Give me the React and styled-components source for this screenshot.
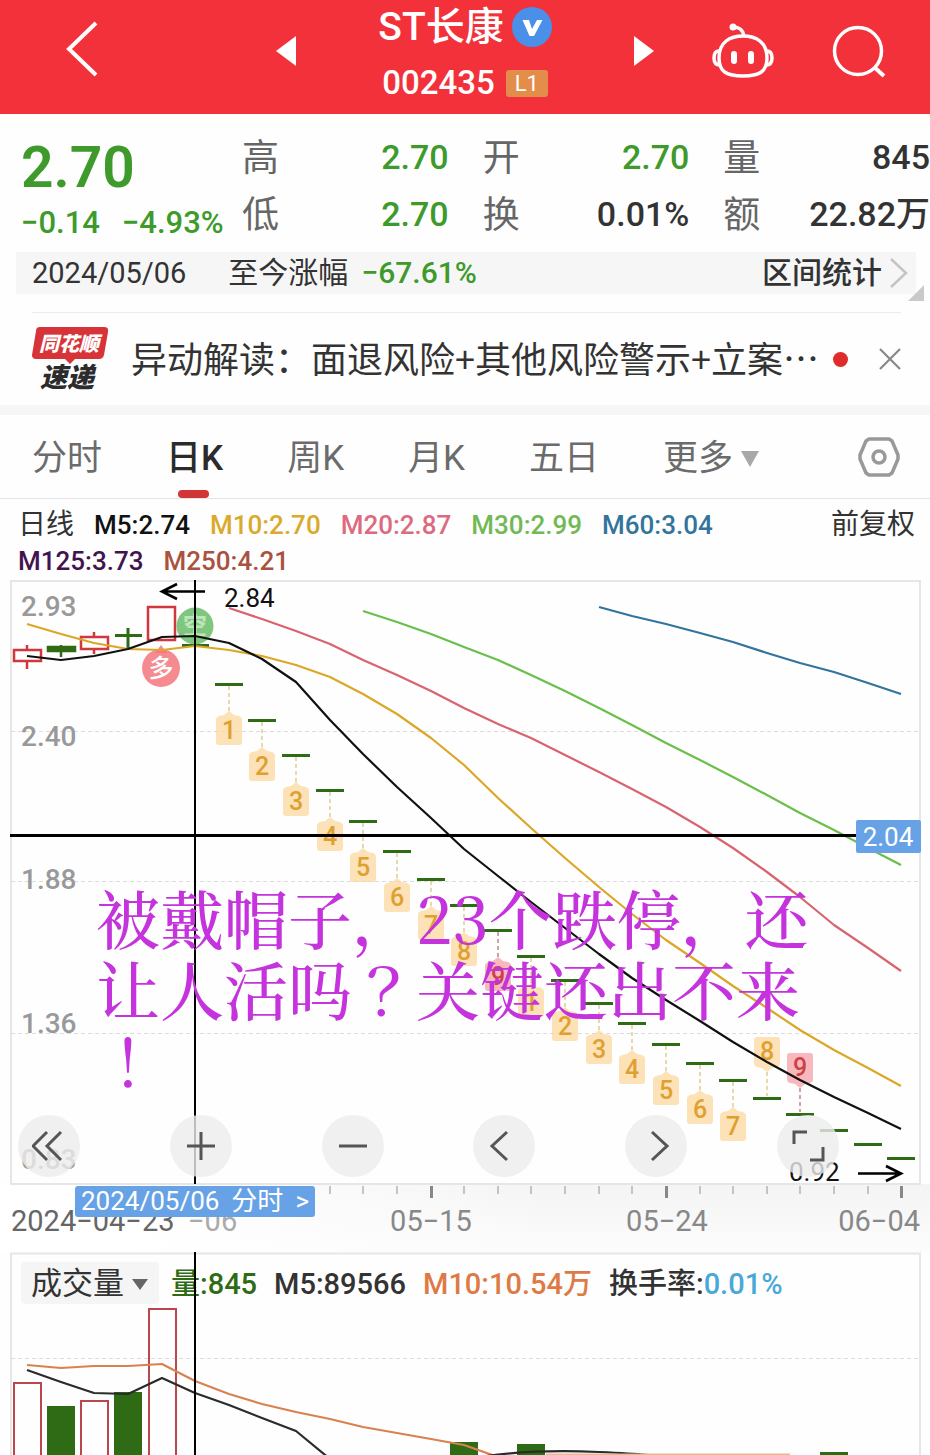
import React from 'react'
import styled, { createGlobalStyle } from 'styled-components'

const GlobalStyle = createGlobalStyle`
  * { box-sizing: border-box; }
  body {
    margin: 0;
    background: #fefefe;
    color: #333;
    font-family: Roboto, "Noto Sans CJK SC", sans-serif;
    line-height: 1.2;
  }
  button {
    border: 0;
    padding: 0;
    background: none;
    font: inherit;
    color: inherit;
    cursor: pointer;
  }
  dl, dt, dd, h1, p { margin: 0; font-weight: 400; }
  svg { display: block; }
`

const UP = '#d0383e'
const DOWN = '#3d9a2b'
const CANDLE_DOWN = '#2f6b14'

/* ---------- header ---------- */

const Header = styled.header`
  display: grid;
  grid-template-columns: 1fr 378px 1fr;
  align-items: center;
  height: 114px;
  background: #f2313a;
  color: #fff;
`

const BackButton = styled.button`
  justify-self: start;
  margin: 0 0 16px 64px;
`

const Switcher = styled.div`
  display: flex;
  align-items: center;
  justify-content: space-between;
  padding-bottom: 12px;
`

const Title = styled.div`
  display: flex;
  flex-direction: column;
  align-items: center;
`

const NameRow = styled.h1`
  display: flex;
  align-items: center;
  gap: 8px;
  height: 54px;
  font-size: 39px;
  font-weight: 500;
`

const CodeRow = styled.div`
  display: flex;
  align-items: center;
  gap: 11px;
  height: 48px;
  padding-top: 10px;
  font-size: 33px;
  font-weight: 500;
`

const LevelBadge = styled.span`
  width: 42px;
  border-radius: 3px;
  background: #e38d4b;
  font-size: 22px;
  font-weight: 400;
  line-height: 27px;
  text-align: center;
`

const HeaderTools = styled.div`
  display: flex;
  justify-content: flex-end;
  align-items: center;
  gap: 58px;
  padding: 0 44px 12px 0;
`

/* ---------- quote ---------- */

const Quote = styled.section`
  display: grid;
  grid-template-columns: 242px 1fr;
  padding-top: 14px;
`

const PriceBlock = styled.div`
  padding-left: 21px;
  color: ${DOWN};
`

const Price = styled.p`
  padding-top: 2px;
  font-size: 57px;
  font-weight: 600;
  line-height: 76px;
`

const Change = styled.p`
  display: flex;
  gap: 22px;
  font-size: 31px;
  font-weight: 500;
  line-height: 34px;
  white-space: nowrap;
`

const Stats = styled.dl`
  display: grid;
  grid-template-columns: repeat(3, 1fr);
  column-gap: 34px;
`

const Stat = styled.div`
  display: flex;
  justify-content: space-between;
  align-items: center;
  height: 57px;
  dt {
    padding-top: 5px;
    color: #666;
    font-size: 37px;
  }
  dd {
    padding-top: 2px;
    color: ${p => (p.$down ? DOWN : '#333')};
    font-size: 34px;
    font-weight: 500;
  }
`

const RangeBar = styled.div`
  position: relative;
  display: flex;
  align-items: center;
  height: 42px;
  margin: 10px 14px 18px 16px;
  padding: 0 8px 0 16px;
  background: #f6f6f6;
  font-size: 30px;
  time {
    margin-right: 42px;
    font-size: 29px;
  }
`

const RangeChange = styled.span`
  margin-left: 13px;
  color: ${DOWN};
  font-weight: 500;
`

const RangeButton = styled.button`
  display: flex;
  align-items: center;
  gap: 8px;
  margin-left: auto;
  font-weight: 500;
`

const Corner = styled.span`
  position: absolute;
  right: -8px;
  bottom: -7px;
  border: 8px solid transparent;
  border-right-color: #c9c9c9;
  border-bottom-color: #c9c9c9;
`

/* ---------- news ---------- */

const News = styled.section`
  display: flex;
  align-items: center;
  height: 93px;
  margin: 0 29px 0 32px;
  border-top: 1px solid #ececec;
`

const Headline = styled.a`
  flex: 1;
  margin-left: 22px;
  padding-bottom: 2px;
  color: #333;
  font-family: "Noto Sans CJK SC", sans-serif;
  font-size: 36px;
  text-decoration: none;
  white-space: nowrap;
`

const UnreadDot = styled.span`
  width: 15px;
  height: 15px;
  margin-right: 31px;
  border-radius: 50%;
  background: #e02b2b;
`

/* ---------- period tabs ---------- */

const Tabs = styled.nav`
  display: flex;
  align-items: center;
  gap: 64px;
  height: 94px;
  padding: 0 30px 0 32px;
  border-top: 10px solid #f6f6f6;
  border-bottom: 1px solid #e4e4e4;
  color: #6b6b6b;
  font-size: 35px;
`

const Tab = styled.button`
  position: relative;
  display: flex;
  align-items: center;
  gap: 8px;
  height: 83px;
  padding-top: 5px;
  white-space: nowrap;
  ${p => p.$active && `
    color: #2b2b2b;
    font-weight: 500;
    &::after {
      content: '';
      position: absolute;
      left: 12px;
      bottom: 0;
      width: 31px;
      height: 8px;
      border-radius: 4px;
      background: #d13535;
    }
  `}
`

const SettingsButton = styled.button`
  margin-left: auto;
`

/* ---------- moving average legend ---------- */

const Legend = styled.div`
  display: flex;
  align-items: flex-start;
  justify-content: space-between;
  height: 81px;
  padding: 8px 15px 0 18px;
  font-size: 26px;
  line-height: 36px;
`

const LegendList = styled.div`
  display: flex;
  flex-wrap: wrap;
  column-gap: 20px;
  max-width: 740px;
`

const LegendItem = styled.span`
  color: ${p => p.$color};
  font-weight: 500;
`

const LegendTitle = styled.span`
  font-size: 28px;
`

const AdjustButton = styled.button`
  font-size: 28px;
  line-height: 36px;
`

/* ---------- charts ---------- */

const ChartBox = styled.section`
  position: relative;
`

const ChartSvg = styled.svg`
  width: 100%;
  height: auto;
`

const Caption = styled.p`
  position: absolute;
  top: 301px;
  left: 96px;
  color: #c433dc;
  font-family: "Noto Serif CJK SC", "Liberation Serif", serif;
  font-size: 64px;
  font-weight: 500;
  line-height: 71px;
  white-space: nowrap;
  pointer-events: none;
`

const Controls = styled.div`
  position: absolute;
  left: 18px;
  right: 91px;
  bottom: 7px;
  display: flex;
  justify-content: space-between;
`

const RoundButton = styled.button`
  display: flex;
  align-items: center;
  justify-content: center;
  width: 62px;
  height: 62px;
  border-radius: 50%;
  background: rgba(236, 236, 236, 0.8);
`

const Axis = styled.div`
  position: relative;
  background: linear-gradient(to right, #fff 12%, transparent 60%), linear-gradient(#f4f4f4, #fcfcfc);
`

const DateTag = styled.button`
  position: absolute;
  top: 2px;
  left: 75px;
  display: flex;
  align-items: center;
  gap: 12px;
  height: 31px;
  padding: 0 6px;
  border-radius: 3px;
  background: #68a2e6;
  color: #fff;
  font-size: 26px;
  white-space: nowrap;
`

const VolumeHead = styled.div`
  position: absolute;
  top: 10px;
  left: 21px;
  display: flex;
  align-items: center;
  gap: 17px;
  height: 42px;
  font-size: 29px;
  line-height: 42px;
  white-space: nowrap;
`

const VolumeSelect = styled.button`
  display: flex;
  align-items: center;
  gap: 8px;
  height: 42px;
  margin-right: -5px;
  padding: 2px 11px 0 10px;
  border-radius: 4px;
  background: #f5f5f5;
  font-size: 31px;
`

const VolumeItem = styled.span`
  padding-top: 2px;
  color: ${p => p.$color};
  font-weight: 500;
`

const VolumeSvg = styled(ChartSvg)`
  position: relative;
  pointer-events: none;
`

const STATS = [
  ['高', '2.70', true],
  ['开', '2.70', true],
  ['量', '845', false],
  ['低', '2.70', true],
  ['换', '0.01%', false],
  ['额', '22.82万', false],
]

const AVERAGES = [
  ['M5:2.74', '#111'],
  ['M10:2.70', '#dba92c'],
  ['M20:2.87', '#dd6b80'],
  ['M30:2.99', '#72b956'],
  ['M60:3.04', '#32749c'],
  ['M125:3.73', '#43134f'],
  ['M250:4.21', '#a9523f'],
]

// x position of the n-th trading day
const dayX = n => 27 + Math.round(n * 33.63)

const LINES = [
  { color: '#32749c', from: 17, ys: [27, 36, 44, 53, 62, 73, 83, 92, 103, 114] },
  { color: '#6abf4b', from: 10, ys: [31, 42, 54, 67, 80, 95, 111, 128, 145, 163, 180, 197, 215, 233, 250, 268, 285] },
  { color: '#d9636f', from: 6, ys: [28, 39, 51, 64, 80, 95, 111, 128, 144, 158, 175, 192, 209, 227, 247, 268, 292, 317, 345, 368, 391] },
  { color: '#dca726', from: 0, ys: [44, 54, 63, 69, 70, 66, 70, 76, 85, 97, 114, 134, 158, 185, 218, 248, 278, 307, 334, 360, 383, 406, 428, 450, 470, 488, 506] },
  { color: '#111', from: 0, ys: [76, 80, 76, 69, 57, 56, 63, 79, 102, 140, 174, 207, 238, 269, 296, 322, 348, 374, 398, 420, 441, 462, 482, 500, 517, 533, 549] },
]

const points = (from, ys) => ys.map((y, i) => `${dayX(from + i)},${y}`).join(' ')

// limit-down days, starting at the 7th day
const DROPS = [104, 140, 175, 210, 241, 271, 299, 325, 350, 376, 400, 423, 443, 464, 483, 500, 518, 534, 550, 564, 578]
const COUNTS = [1, 2, 3, 4, 5, 6, 7, 8, 9, 1, 2, 3, 4, 5, 6, 7, 8, 9]

function CountMark({ x, y, count, above }) {
  const hot = count === 9
  const top = above ? y - 61 : y + 27
  const shape = above
    ? `M${x - 13} ${top + 3}q0-3 3-3h20q3 0 3 3v23q0 3-3 4l-5 1-5 4-5-4-5-1q-3-1-3-4z`
    : `M${x} ${top}l5 4 5 1q3 1 3 4v22q0 3-3 3h-20q-3 0-3-3v-22q0-3 3-4l5-1z`
  return (
    <g>
      <line
        x1={x} x2={x}
        y1={above ? top + 35 : y + 2} y2={above ? y - 2 : top}
        stroke={hot ? '#8d5050' : '#cdb35e'} strokeWidth="1" strokeDasharray="4 3"
      />
      <path d={shape} fill={hot ? '#f28b92' : '#fbd597'} opacity={hot ? 0.6 : 0.7} />
      <text x={x} y={top + (above ? 23 : 28)} textAnchor="middle" fontSize="25" fontWeight="500" fill={hot ? '#cf4148' : '#dfa031'}>{count}</text>
    </g>
  )
}

function Candle({ x, top, bottom, high, low, rise }) {
  const color = rise ? UP : CANDLE_DOWN
  return (
    <g stroke={color} strokeWidth="2.5" fill={rise ? 'none' : color}>
      <line x1={x} x2={x} y1={high} y2={top} />
      <rect x={x - 13} y={top} width="27" height={bottom - top} />
      <line x1={x} x2={x} y1={bottom} y2={low} />
    </g>
  )
}

function PriceChart() {
  return (
    <ChartSvg viewBox="0 0 930 604" role="img" aria-label="日K">
      <rect x="11" y="1" width="909" height="603" fill="none" stroke="#e6e6e6" strokeWidth="2" />
      <g stroke="#dcdcdc" strokeDasharray="4 3">
        <line x1="11" x2="920" y1="151.5" y2="151.5" />
        <line x1="11" x2="920" y1="301.5" y2="301.5" />
        <line x1="11" x2="920" y1="453.5" y2="453.5" />
      </g>
      <g fill="#999" fontSize="28" fontWeight="500">
        <text x="21" y="36">2.93</text>
        <text x="21" y="166">2.40</text>
        <text x="21" y="309">1.88</text>
        <text x="21" y="453">1.36</text>
        <text x="21" y="589">0.83</text>
      </g>

      <Candle x={27} high={65} top={70} bottom={81} low={89} rise />
      <Candle x={61} high={65} top={67} bottom={71} low={77} />
      <Candle x={94} high={52} top={57} bottom={69} low={74} rise />
      <path d="M115 55.500h27M128 48v20" stroke={CANDLE_DOWN} strokeWidth="3" />
      <Candle x={161} high={27} top={27} bottom={60} low={60} rise />
      <rect x="182" y="64" width="27" height="3" fill={CANDLE_DOWN} />

      <circle cx="195" cy="46" r="18.500" fill="#5fb95f" opacity="0.8" />
      <text x="195" y="54" textAnchor="middle" fontSize="24" fontWeight="700" fill="#bfe6bb">空</text>
      <path d="M161 65l6 8h-12z" fill="#f3777c" opacity="0.85" />
      <circle cx="161" cy="88" r="19" fill="#f3777c" opacity="0.85" />
      <text x="161" y="97" textAnchor="middle" fontSize="25" fontWeight="500" fill="#fff">多</text>

      {DROPS.map((y, i) => (
        <rect key={i} x={dayX(i + 6) - 14} y={y - 1} width="28" height="3" fill={CANDLE_DOWN} />
      ))}
      {COUNTS.map((count, i) => (
        <CountMark key={i} x={dayX(i + 6)} y={DROPS[i]} count={count} above={i > 15} />
      ))}
      {LINES.map(line => (
        <polyline key={line.color} points={points(line.from, line.ys)} fill="none" stroke={line.color} strokeWidth="2.2" strokeLinejoin="round" />
      ))}

      <g fill="none" stroke="#000" strokeWidth="2.6">
        <path d="M205 11.500H162M177 4l-15 7.500 15 7.500" />
        <path d="M858 593.500h43M886 586l15 7.500-15 7.500" />
      </g>
      <text x="224" y="27" fontSize="26" fill="#111">2.84</text>
      <text x="789" y="601" fontSize="26" fill="#111">0.92</text>

      <rect x="10" y="254" width="846" height="3" fill="#000" />
      <rect x="194" y="0" width="2" height="604" fill="#000" />
      <rect x="856" y="240" width="65" height="33" rx="2" fill="#68a2e6" />
      <text x="888" y="266" textAnchor="middle" fontSize="26" fill="#fff">2.04</text>
    </ChartSvg>
  )
}

function DateAxis() {
  const ticks = Array.from({ length: 21 }, (_, i) => i + 6)
  return (
    <ChartSvg viewBox="0 0 930 68" role="img" aria-label="日期">
      <line x1="10" x2="921" y1="0.5" y2="0.5" stroke="#e6e6e6" />
      {ticks.map(n => {
        const major = n === 12 || n === 19 || n === 26
        return <rect key={n} x={dayX(n) - 1} y="2" width={major ? 3 : 2} height={major ? 12 : 8} fill={major ? '#888' : '#c4c4c4'} />
      })}
      <g fontSize="29" fill="#888">
        <text x="188" y="47" fill="#aaa">−06</text>
        <text x="431" y="47" textAnchor="middle">05−15</text>
        <text x="667" y="47" textAnchor="middle">05−24</text>
        <text x="920" y="47" textAnchor="end">06−04</text>
        <text x="11" y="47" fill="#666">2024−04−23</text>
      </g>
    </ChartSvg>
  )
}

const VOLUMES = [
  [0, 130, true],
  [1, 154, false],
  [2, 148, true],
  [3, 140, false],
  [4, 56, true],
  [13, 190, false],
  [15, 192, false],
  [24, 200, false],
]

function VolumeChart() {
  return (
    <VolumeSvg viewBox="0 0 930 203" role="img" aria-label="成交量">
      <path d="M11 203V1.500H920V203" fill="none" stroke="#e6e6e6" strokeWidth="2" />
      <line x1="11" x2="920" y1="106.500" y2="106.500" stroke="#dcdcdc" strokeDasharray="4 3" />
      {VOLUMES.map(([n, y, rise]) => rise
        ? <path key={n} d={`M${dayX(n) - 13} 203V${y + 1}h27V203`} fill="none" stroke="#b9474c" strokeWidth="2" />
        : <rect key={n} x={dayX(n) - 14} y={y} width="28" height={203 - y} fill={CANDLE_DOWN} />)}
      <g fill="none" strokeWidth="2.2" strokeLinejoin="round">
        <polyline stroke="#d9814f" points={points(0, [113, 116, 114, 114, 112, 129, 142, 152, 160, 167, 175, 181, 187, 193, 205])} />
        <polyline stroke="#2b2b2b" points={points(0, [118, 130, 141, 142, 126, 141, 153, 166, 179, 207])} />
        <path stroke="#2b2b2b" d="M480 205Q531 197 599 200T650 205" />
        <path stroke="#e9b594" d="M546 202.500H790" />
      </g>
      <rect x="194" y="0" width="2" height="203" fill="#000" />
    </VolumeSvg>
  )
}

const Stroke = ({ d }) => (
  <svg width="34" height="34" viewBox="0 0 34 34" fill="none" stroke="#555" strokeWidth="3" aria-hidden="true">
    <path d={d} />
  </svg>
)

const CONTROLS = [
  ['最早', 'M15 3L1 17l14 14M29 3L15 17l14 14'],
  ['放大', 'M17 3v28M3 17h28'],
  ['缩小', 'M3 17h28'],
  ['向左', 'M20 3L5 17l15 14'],
  ['向右', 'M13 3l15 14-15 14'],
  ['全屏', 'M3 15V3h13M19 31h13V18'],
]

function NewsLogo() {
  return (
    <svg width="77" height="66" viewBox="0 0 77 66" aria-label="同花顺速递" role="img">
      <path d="M8 1h64q5 0 4 5l-4 23q-1 4-5 4H43l-5 5-5-5H4q-4 0-4-4L4 5q0-4 4-4z" fill="#d63438" />
      <g fontFamily="'Noto Sans CJK SC', sans-serif" fontWeight="900" fontStyle="italic">
        <text x="7" y="25" fontSize="20" fill="#fff">同花顺</text>
        <text x="8" y="61" fontSize="27" fill="#2c2c2c">速递</text>
      </g>
    </svg>
  )
}

function App() {
  return (
    <>
      <GlobalStyle />
      <Header>
        <BackButton aria-label="返回">
          <svg width="36" height="58" viewBox="0 0 36 58" fill="none" stroke="#fff" strokeWidth="4"><path d="M32 3L5 29l27 26" /></svg>
        </BackButton>
        <Switcher>
          <button aria-label="上一只"><svg width="21" height="30" viewBox="0 0 21 30"><path d="M20 0v30L0 15z" fill="#fff" /></svg></button>
          <Title>
            <NameRow>
              ST长康
              <svg width="40" height="40" viewBox="0 0 40 40" aria-hidden="true">
                <circle cx="20" cy="20" r="20" fill="#4a90e8" />
                <path d="M10.500 13H17l3 9 5-9h5.500L22 29h-4.500z" fill="#fff" />
              </svg>
            </NameRow>
            <CodeRow>002435<LevelBadge>L1</LevelBadge></CodeRow>
          </Title>
          <button aria-label="下一只"><svg width="21" height="30" viewBox="0 0 21 30"><path d="M1 0v30l20-15z" fill="#fff" /></svg></button>
        </Switcher>
        <HeaderTools>
          <button aria-label="助手">
            <svg width="62" height="56" viewBox="0 0 62 56" fill="none" stroke="#fff" strokeWidth="3.500">
              <path d="M31 13c13 0 24 6 24 22 0 14-8 18-24 18S7 49 7 35c0-16 11-22 24-22z" />
              <path d="M7 28c-4 0-5 3-5 7s1 7 6 7M55 28c4 0 5 3 5 7s-1 7-6 7M21 4c6 0 10 2 11 9" />
              <circle cx="21" cy="4" r="3.500" fill="#fff" stroke="none" />
              <path d="M22 31v7M39 31v7" strokeWidth="6" strokeLinecap="round" />
            </svg>
          </button>
          <button aria-label="搜索">
            <svg width="54" height="54" viewBox="0 0 54 54" fill="none" stroke="#fff" strokeWidth="3.500">
              <circle cx="26" cy="27" r="23.500" /><path d="M42 43l10 9" strokeWidth="4" />
            </svg>
          </button>
        </HeaderTools>
      </Header>

      <Quote>
        <PriceBlock>
          <Price>2.70</Price>
          <Change><span>−0.14</span><span>−4.93%</span></Change>
        </PriceBlock>
        <Stats>
          {STATS.map(([label, value, down]) => (
            <Stat key={label} $down={down}><dt>{label}</dt><dd>{value}</dd></Stat>
          ))}
        </Stats>
      </Quote>
      <RangeBar>
        <time>2024/05/06</time>
        至今涨幅<RangeChange>−67.61%</RangeChange>
        <RangeButton>
          区间统计
          <svg width="18" height="32" viewBox="0 0 18 32" fill="none" stroke="#c4c4c4" strokeWidth="2.500"><path d="M1 2l15 14L1 30" /></svg>
        </RangeButton>
        <Corner />
      </RangeBar>

      <News>
        <NewsLogo />
        <Headline href="#news">异动解读：面退风险+其他风险警示+立案…</Headline>
        <UnreadDot />
        <button aria-label="关闭">
          <svg width="22" height="22" viewBox="0 0 22 22" stroke="#888" strokeWidth="2.200"><path d="M1 1l20 20M21 1L1 21" /></svg>
        </button>
      </News>

      <Tabs>
        <Tab>分时</Tab>
        <Tab $active>日K</Tab>
        <Tab>周K</Tab>
        <Tab>月K</Tab>
        <Tab>五日</Tab>
        <Tab>
          更多
          <svg width="18" height="16" viewBox="0 0 18 16"><path d="M0 0h18L9 16z" fill="#a8a8a8" /></svg>
        </Tab>
        <SettingsButton aria-label="设置">
          <svg width="42" height="40" viewBox="0 0 42 40" fill="none" stroke="#999" strokeWidth="3.500" strokeLinejoin="round">
            <path d="M11 2h20l3 2 6 14v4l-6 14-3 2H11l-3-2-6-14v-4L8 4z" /><circle cx="21" cy="20" r="6" />
          </svg>
        </SettingsButton>
      </Tabs>

      <Legend>
        <LegendList>
          <LegendTitle>日线</LegendTitle>
          {AVERAGES.map(([text, color]) => <LegendItem key={text} $color={color}>{text}</LegendItem>)}
        </LegendList>
        <AdjustButton>前复权</AdjustButton>
      </Legend>

      <ChartBox>
        <PriceChart />
        <Caption>被戴帽子，23个跌停，还<br />让人活吗<span lang="zh-TW">？</span>关键还出不来<br /><span lang="zh-TW">！</span></Caption>
        <Controls>
          {CONTROLS.map(([label, d]) => (
            <RoundButton key={label} aria-label={label}><Stroke d={d} /></RoundButton>
          ))}
        </Controls>
      </ChartBox>
      <Axis>
        <DateAxis />
        <DateTag><span>2024/05/06</span><span>分时</span><span>&gt;</span></DateTag>
      </Axis>
      <ChartBox>
        <VolumeHead>
          <VolumeSelect>
            成交量
            <svg width="16" height="11" viewBox="0 0 16 11"><path d="M0 0h16L8 11z" fill="#666" /></svg>
          </VolumeSelect>
          <VolumeItem $color={CANDLE_DOWN}>量:845</VolumeItem>
          <VolumeItem $color="#333">M5:89566</VolumeItem>
          <VolumeItem $color="#dd7a45">M10:10.54万</VolumeItem>
          <VolumeItem $color="#333">换手率:<VolumeItem $color="#4aa8d8">0.01%</VolumeItem></VolumeItem>
        </VolumeHead>
        <VolumeChart />
      </ChartBox>
    </>
  )
}

export default App
